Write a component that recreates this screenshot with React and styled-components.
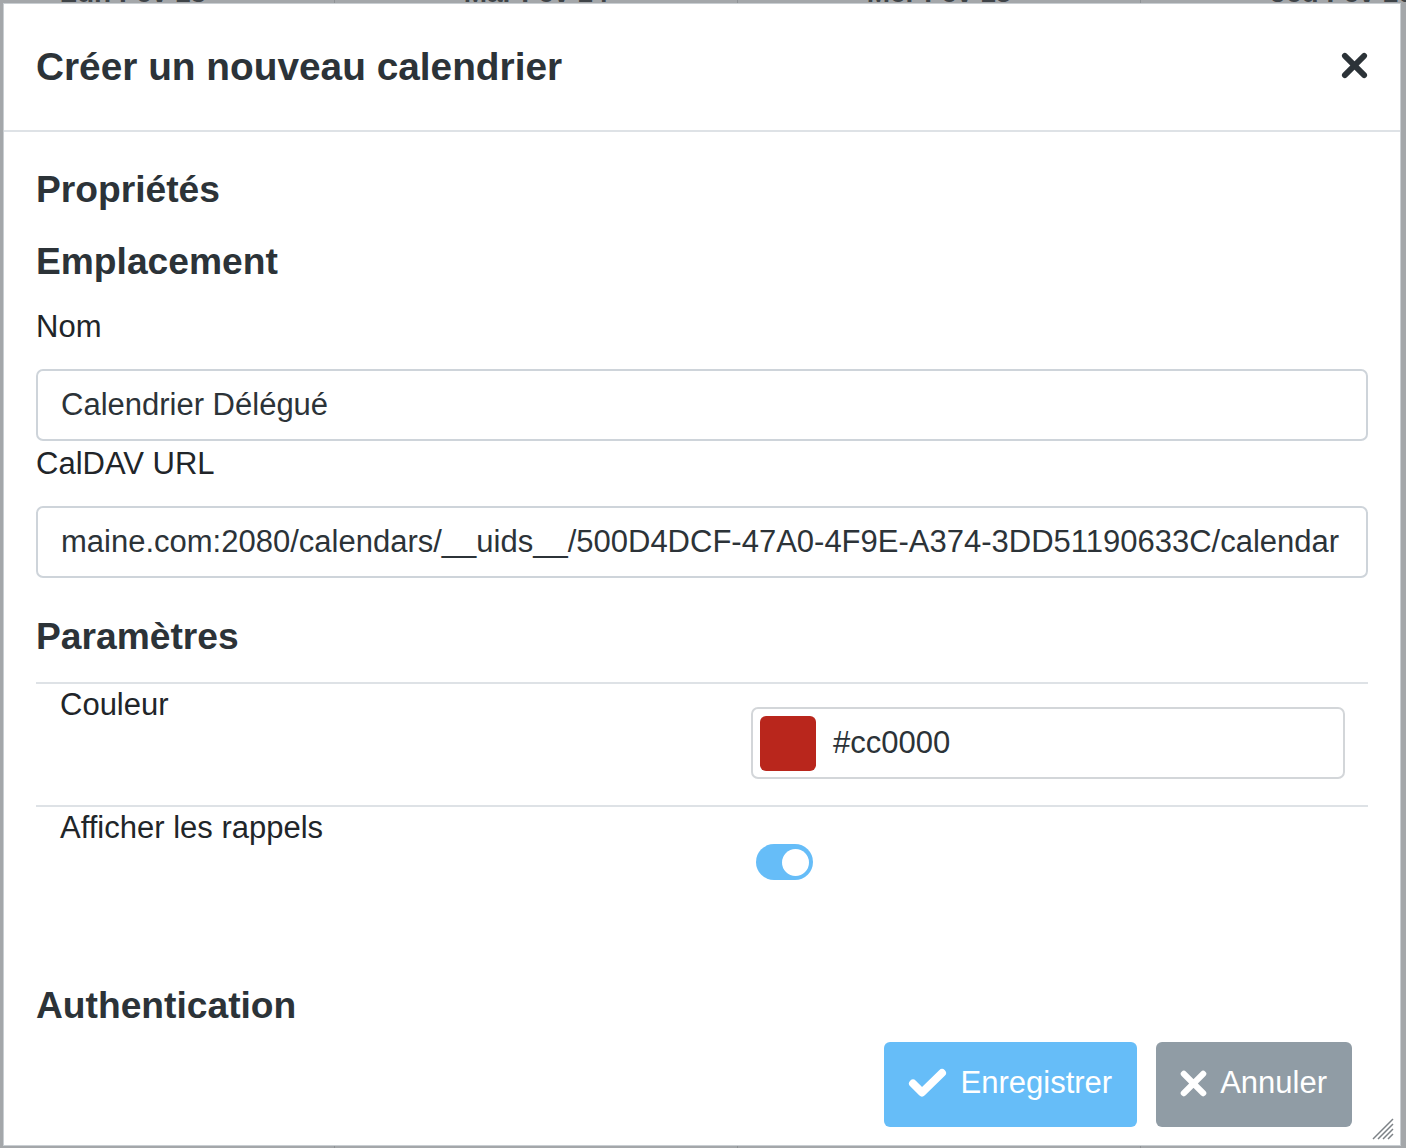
import React from 'react';
import styled, { createGlobalStyle } from 'styled-components';

const GlobalStyle = createGlobalStyle`
  html, body {
    margin: 0;
    padding: 0;
    height: 100%;
    overflow: hidden;
  }
  body {
    background: #a4a7aa;
    font-family: "Liberation Sans", Arial, Helvetica, sans-serif;
    color: #212529;
  }
  * { box-sizing: border-box; }
`

// calendar behind the modal overlay
const Backdrop = styled.div`
  display: flex;
  margin-left: -68px;
  height: 100vh;
`
const DayColumn = styled.div`
  width: 403px;
  flex: 0 0 403px;
  border-right: 1px solid #8e9295;
`
const DayHead = styled.div`
  margin-top: -23px;
  height: 32px;
  line-height: 32px;
  text-align: center;
  font-size: 28px;
  font-weight: bold;
  color: #3f4448;
`

const Dialog = styled.div`
  position: fixed;
  top: 3px;
  left: 3px;
  width: 1398px;
  bottom: 2px;
  background: #fff;
  border: 1px solid #c9ced2;
  display: flex;
  flex-direction: column;
`

const Header = styled.div`
  height: 128px;
  flex: 0 0 128px;
  display: flex;
  align-items: center;
  justify-content: space-between;
  padding: 0 32px 0 32px;
  border-bottom: 2px solid #dee2e6;
`

const Title = styled.h2`
  margin: 0;
  font-size: 38.8px;
  font-weight: bold;
  color: #2c3338;
`

const CloseButton = styled.button`
  border: 0;
  background: none;
  padding: 0;
  margin-top: -4px;
  width: 27px;
  height: 27px;
  display: flex;
  cursor: pointer;
`

const Body = styled.div`
  flex: 1;
  padding: 35px 32px 0 32px;
  display: flex;
  flex-direction: column;
`

const Heading = styled.h3`
  margin: ${p => p.$top || 0}px 0 ${p => p.$bottom ?? 28}px 0;
  font-size: 37.2px;
  line-height: 44px;
  font-weight: bold;
  color: #2c3338;
`

const FieldLabel = styled.label`
  display: block;
  font-size: 31px;
  line-height: 45px;
  margin-bottom: 20px;
  color: #212529;
`

const TextInput = styled.input`
  display: block;
  width: 100%;
  height: 72px;
  border: 2px solid #ced4da;
  border-radius: 7px;
  padding: 0 23px;
  font-family: inherit;
  font-size: 31px;
  color: #2c3338;
  background: #fff;
  outline: none;
`

const SettingsTable = styled.div`
  display: flex;
  flex-direction: column;
`

const SettingRow = styled.div`
  display: grid;
  grid-template-columns: 691px 1fr;
  align-items: start;
  border-top: 2px solid #dee2e6;
`

const SettingLabel = styled.div`
  padding: 0 24px;
  font-size: 31px;
  line-height: 42px;
  color: #212529;
`

const SettingValue = styled.div`
  padding: ${p => p.$top}px 23px ${p => p.$bottom}px 24px;
`

const ColorBox = styled.div`
  height: 72px;
  border: 2px solid #d3d6d9;
  border-radius: 7px;
  display: flex;
  align-items: center;
  padding: 0 7px;
  gap: 17px;
`

const Swatch = styled.div`
  width: 56px;
  height: 55px;
  border-radius: 6px;
  background: ${p => p.$color};
`

const ColorValue = styled.span`
  font-size: 31px;
  color: #2c3338;
`

const Toggle = styled.div`
  width: 57px;
  height: 36px;
  margin-left: 5px;
  border-radius: 18px;
  background: #66bdf8;
  display: flex;
  align-items: center;
  justify-content: ${p => (p.$on ? 'flex-end' : 'flex-start')};
  padding: 0 4px;
`

const Knob = styled.div`
  width: 27px;
  height: 27px;
  border-radius: 50%;
  background: #fff;
`

const Footer = styled.div`
  display: flex;
  justify-content: flex-end;
  gap: 19px;
  padding-right: 16px;
  margin-top: 15px;
`

const Button = styled.button`
  height: 85px;
  border: 0;
  border-radius: 6px;
  padding: 0 25px 3px 24px;
  display: flex;
  align-items: center;
  gap: ${p => p.$gap}px;
  background: ${p => p.$bg};
  color: #fff;
  font-family: inherit;
  font-size: 31px;
  cursor: pointer;
`

const Grip = styled.svg`
  position: absolute;
  right: 6px;
  bottom: 5px;
`

const CrossIcon = ({ size = 27, color = '#fff', stroke = 6.5 }) => (
  <svg width={size} height={size} viewBox="0 0 28 28">
    <path d="M4 4 L24 24 M24 4 L4 24" stroke={color} strokeWidth={stroke} strokeLinecap="round" fill="none" />
  </svg>
);

const CheckIcon = () => (
  <svg width="39" height="30" viewBox="0 0 39 30">
    <path d="M5 15.5 L14 24.5 L34 5" stroke="#fff" strokeWidth="8" strokeLinecap="round" strokeLinejoin="round" fill="none" />
  </svg>
);

const days = ['Lun Fév 13', 'Mar Fév 14', 'Mer Fév 15', 'Jeu Fév 16'];

const App = () => {
  return (
    <>
      <GlobalStyle />
      <Backdrop>
        {days.map(d => (
          <DayColumn key={d}>
            <DayHead>{d}</DayHead>
          </DayColumn>
        ))}
      </Backdrop>
      <Dialog>
        <Header>
          <Title>Créer un nouveau calendrier</Title>
          <CloseButton aria-label="Fermer">
            <CrossIcon color="#2c3338" stroke={6} />
          </CloseButton>
        </Header>
        <Body>
          <Heading>Propriétés</Heading>
          <Heading $bottom={21}>Emplacement</Heading>
          <FieldLabel>Nom</FieldLabel>
          <TextInput defaultValue="Calendrier Délégué" />
          <FieldLabel>CalDAV URL</FieldLabel>
          <TextInput readOnly defaultValue="maine.com:2080/calendars/__uids__/500D4DCF-47A0-4F9E-A374-3DD51190633C/calendar" />
          <Heading $top={36} $bottom={24}>Paramètres</Heading>
          <SettingsTable>
            <SettingRow>
              <SettingLabel>Couleur</SettingLabel>
              <SettingValue $top={23} $bottom={26}>
                <ColorBox>
                  <Swatch $color="#b9261c" />
                  <ColorValue>#cc0000</ColorValue>
                </ColorBox>
              </SettingValue>
            </SettingRow>
            <SettingRow>
              <SettingLabel>Afficher les rappels</SettingLabel>
              <SettingValue $top={37} $bottom={24}>
                <Toggle $on>
                  <Knob />
                </Toggle>
              </SettingValue>
            </SettingRow>
          </SettingsTable>
          <Heading $top={79} $bottom={0}>Authentication</Heading>
          <Footer>
            <Button $bg="#66bdf8" $gap={14}>
              <CheckIcon />
              Enregistrer
            </Button>
            <Button $bg="#909ca5" $gap={13}>
              <CrossIcon size={27} />
              Annuler
            </Button>
          </Footer>
        </Body>
        <Grip width="22" height="22" viewBox="0 0 22 22">
          <path d="M21 1 L1 21 M21 6 L6 21 M21 11 L11 21 M21 16 L16 21" stroke="#7d8287" strokeWidth="1.5" />
        </Grip>
      </Dialog>
    </>
  );
};

export default App;
